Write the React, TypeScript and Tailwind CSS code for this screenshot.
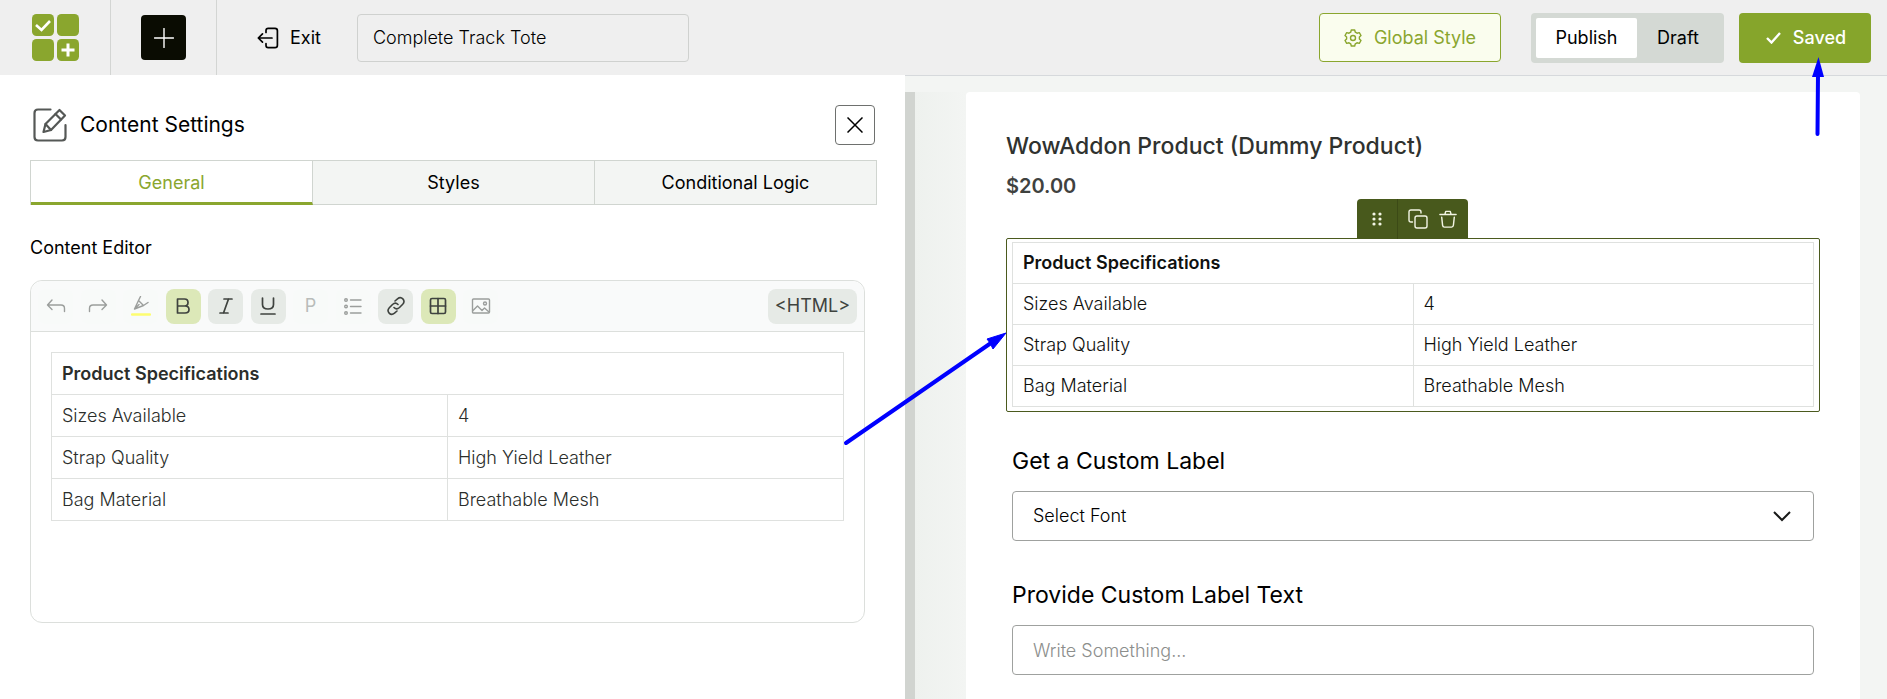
import { useState } from 'react'
import type { ReactNode } from 'react'

const SPEC_TITLE = 'Product Specifications'

const SPECS = [
    { name: 'Sizes Available', value: '4' },
    { name: 'Strap Quality', value: 'High Yield Leather' },
    { name: 'Bag Material', value: 'Breathable Mesh' },
]

const TABS = ['General', 'Styles', 'Conditional Logic']

function Logo() {
    return (
        <svg width="47" height="47" viewBox="0 0 47 47" aria-hidden="true">
            <g fill="#8aa62e">
                <rect width="22" height="22" rx="4.5" />
                <rect x="25" width="22" height="22" rx="4.5" />
                <rect y="25" width="22" height="22" rx="4.5" />
                <rect x="25" y="25" width="22" height="22" rx="4.5" />
            </g>
            <path d="M4 11l5.5 5L18 7" fill="none" stroke="#fff" strokeWidth="2.6" />
            <path d="M36 29.5v13M29.500 36h13" fill="none" stroke="#fff" strokeWidth="3" />
        </svg>
    )
}

function ExitIcon() {
    return (
        <svg width="22" height="22" viewBox="0 0 22 22" fill="none" stroke="currentColor" strokeWidth="1.7" strokeLinecap="round" strokeLinejoin="round" aria-hidden="true">
            <path d="M9 5.500V3.500Q9 1.300 11.200 1.300H18Q20.400 1.300 20.400 3.700V18.300Q20.400 20.700 18 20.700H11.200Q9 20.700 9 18.500V16.500" />
            <path d="M15 11H1.500M5.500 6.800L1.300 11l4.200 4.200" />
        </svg>
    )
}

function EditIcon() {
    return (
        <svg width="34" height="34" viewBox="0 0 34 34" fill="none" stroke="#555856" strokeWidth="2.2" strokeLinecap="round" strokeLinejoin="round" aria-hidden="true">
            <path d="M17.500 1.500H5Q1.500 1.500 1.500 5V29Q1.500 32.500 5 32.500H29Q32.500 32.500 32.500 29V17" />
            <path d="M10.500 24L12.500 16L26.500 2L32 7.500L18 22Z" />
            <path d="M12.500 16L18 22M22.500 6L28 11.500" />
        </svg>
    )
}

function GearIcon() {
    return (
        <svg width="18" height="18" viewBox="0 0 18 18" fill="none" stroke="currentColor" strokeWidth="1.4" strokeLinejoin="round" aria-hidden="true">
            <path d="M7.300 1H10.700L11.300 3.200L13 4.200L15.300 3.600L17 6.500L15.400 8.100V9.900L17 11.500L15.300 14.400L13 13.800L11.300 14.800L10.700 17H7.300L6.700 14.800L5 13.800L2.700 14.400L1 11.500L2.600 9.900V8.100L1 6.500L2.700 3.600L5 4.200L6.700 3.200Z" />
            <circle cx="9" cy="9" r="2.500" />
        </svg>
    )
}

function Icon({ children, size = 20, weight = '1.4' }: { children: ReactNode; size?: number; weight?: string }) {
    return (
        <svg width={size} height={size} viewBox="0 0 20 20" fill="none" stroke="currentColor" strokeWidth={weight} strokeLinecap="round" strokeLinejoin="round" aria-hidden="true">
            {children}
        </svg>
    )
}

const TOOLS: { label: string; tone: 'idle' | 'soft' | 'active'; icon: ReactNode }[] = [
    {
        label: 'Undo',
        tone: 'idle',
        icon: <Icon><path d="M6 4L1.500 9L6 13.500M1.500 9H15Q18.500 9 18.500 12.500V15.500" /></Icon>,
    },
    {
        label: 'Redo',
        tone: 'idle',
        icon: <Icon><path d="M14 4L18.500 9L14 13.500M18.500 9H5Q1.500 9 1.500 12.500V15.500" /></Icon>,
    },
    {
        label: 'Highlight',
        tone: 'idle',
        icon: (
            <Icon>
                <path d="M9.500 0.500L7.500 4.500L12.500 9.500L17 6.500M7.500 4.500L3.500 13L12.500 9.500M3.500 13L8 8.500" />
                <path d="M1 18.500H19" stroke="#fdfd70" strokeWidth="2.500" />
            </Icon>
        ),
    },
    {
        label: 'Bold',
        tone: 'active',
        icon: <Icon weight="1.7"><path d="M4.500 3H11.500Q15 3 15 6.500T11.500 10H4.500ZM4.500 10H12Q16 10 16 13.500T12 17H4.500Z" /></Icon>,
    },
    {
        label: 'Italic',
        tone: 'soft',
        icon: <Icon weight="1.7"><path d="M8 3H16M4 17H12M12.500 3L7.500 17" /></Icon>,
    },
    {
        label: 'Underline',
        tone: 'soft',
        icon: <Icon weight="1.7"><path d="M4.500 2V8.500Q4.500 13 10 13T15.500 8.500V2M3 18H17" /></Icon>,
    },
    {
        label: 'Paragraph',
        tone: 'idle',
        icon: <span className="text-lg text-[#b9bcba]">P</span>,
    },
    {
        label: 'Bullet list',
        tone: 'idle',
        icon: (
            <Icon>
                <path d="M7.500 4H18M7.500 10.500H18M7.500 17H18" />
                <circle cx="3" cy="4" r="1.300" />
                <circle cx="3" cy="10.500" r="1.300" />
                <circle cx="3" cy="17" r="1.300" />
            </Icon>
        ),
    },
    {
        label: 'Link',
        tone: 'soft',
        icon: (
            <Icon weight="1.6">
                <path d="M9 5L11.500 2.800C15.500 -0.500 20 4.500 16.700 8.200L13.500 11.500C11.800 13 9.500 13 8 11.500" />
                <path d="M11 15L8.500 17.200C4.500 20.500 0 15.500 3.300 11.800L6.500 8.500C8.200 7 10.500 7 12 8.500" />
            </Icon>
        ),
    },
    {
        label: 'Table',
        tone: 'active',
        icon: (
            <Icon weight="1.7">
                <rect x="2.500" y="2.500" width="15" height="15" rx="1.500" />
                <path d="M10 2.500V17.500M2.500 10H17.500" />
            </Icon>
        ),
    },
    {
        label: 'Image',
        tone: 'idle',
        icon: (
            <Icon>
                <rect x="1.500" y="3" width="17" height="14" rx="1" />
                <circle cx="14" cy="7.500" r="1.500" />
                <path d="M2 14.500L6.500 10L11 14.500L13.500 12L18 16" />
            </Icon>
        ),
    },
]

const TONES = {
    idle: 'bg-[#f8faf9] text-[#9b9e9c]',
    soft: 'bg-[#e6eae6] text-[#3f433f]',
    active: 'bg-[#dce8b8] text-[#3f433f]',
}

function Header() {
    return (
        <header className="flex h-[75px] items-center bg-[#efefef] text-lg">
            <div className="flex h-full w-[111px] items-center justify-center border-r border-[#d3d5d3]">
                <Logo />
            </div>
            <div className="flex h-full w-[106px] items-center justify-center border-r border-[#d3d5d3]">
                <button aria-label="Add block" className="flex size-[45px] items-center justify-center rounded bg-[#0a0c02] text-white">
                    <Icon><path d="M10 0.500V19.500M0.500 10H19.500" /></Icon>
                </button>
            </div>
            <button className="ml-10 flex items-center gap-[11px] text-black">
                <ExitIcon />
                Exit
            </button>
            <input
                aria-label="Product name"
                defaultValue="Complete Track Tote"
                className="ml-9 h-12 w-[332px] rounded border border-[#cfd1cf] px-[15px] font-light text-black"
            />
            <div className="mr-4 ml-auto flex items-center">
                <button className="flex h-[49px] w-[182px] items-center justify-center gap-3 rounded border border-[#8aa62e] bg-[#fafdee] text-[#8aa62e]">
                    <GearIcon />
                    Global Style
                </button>
                <div className="ml-[30px] flex h-[50px] rounded bg-[#d4d9d4] p-[5px] text-black">
                    <button className="w-[101px] rounded-xs bg-white">Publish</button>
                    <button className="w-[82px]">Draft</button>
                </div>
                <button className="ml-[15px] flex h-[50px] w-[132px] items-center justify-center gap-3 rounded bg-[#86a52b] pl-0.5 font-medium text-white">
                    <svg width="15" height="12" viewBox="0 0 15 12" fill="none" stroke="currentColor" strokeWidth="2.4" aria-hidden="true">
                        <path d="M1 6l4.500 4.500L14 1" />
                    </svg>
                    Saved
                </button>
            </div>
        </header>
    )
}

function SpecTable({ cell }: { cell: string }) {
    return (
        <table className="w-full table-fixed border-collapse text-left text-lg font-light">
            <thead>
                <tr>
                    <th colSpan={2} className={`${cell} font-semibold`}>{SPEC_TITLE}</th>
                </tr>
            </thead>
            <tbody>
                {SPECS.map(spec => (
                    <tr key={spec.name}>
                        <td className={cell}>{spec.name}</td>
                        <td className={cell}>{spec.value}</td>
                    </tr>
                ))}
            </tbody>
        </table>
    )
}

function SettingsPanel() {
    const [tab, setTab] = useState('General')

    return (
        <section className="w-[905px] bg-white pt-[30px] pr-7 pl-[30px] text-black">
            <div className="flex items-center gap-[13px] pl-[3px]">
                <EditIcon />
                <h2 className="text-[21px]">Content Settings</h2>
                <button aria-label="Close" className="mr-0.5 ml-auto flex size-10 items-center justify-center rounded border border-[#6e706e]">
                    <svg width="16" height="16" viewBox="0 0 16 16" stroke="currentColor" strokeWidth="1.5" aria-hidden="true">
                        <path d="M0.500 0.500L15.500 15.500M15.500 0.500L0.500 15.500" />
                    </svg>
                </button>
            </div>

            <div role="tablist" className="mt-[15px] grid h-[45px] grid-cols-3 border-l border-[#d0d5d0] text-lg">
                {TABS.map(name => (
                    <button
                        key={name}
                        role="tab"
                        aria-selected={tab === name}
                        onClick={() => setTab(name)}
                        className={
                            tab === name
                                ? 'border-t border-r border-b-3 border-t-[#d0d5d0] border-r-[#d0d5d0] border-b-[#8aa62e] pt-0.5 text-[#8aa62e]'
                                : 'border-t border-r border-b border-[#d0d5d0] bg-[#f3f5f3]'
                        }
                    >
                        {name}
                    </button>
                ))}
            </div>

            <h3 className="mt-[29px] text-lg">Content Editor</h3>
            <div className="mt-[18px] mr-3 min-h-[343px] rounded-xl border border-[#dcdfdc]">
                <div className="flex h-[51px] items-center justify-between rounded-t-xl border-b border-[#dcdfdc] bg-[#f9fafa] px-[7px]">
                    <div className="flex w-[460px] justify-between">
                        {TOOLS.map(tool => (
                            <button
                                key={tool.label}
                                aria-label={tool.label}
                                className={`flex size-[35px] items-center justify-center rounded-lg ${TONES[tool.tone]}`}
                            >
                                {tool.icon}
                            </button>
                        ))}
                    </div>
                    <button className="h-[35px] w-[89px] rounded-lg bg-[#e6eae6] text-lg text-[#3f433f]">&lt;HTML&gt;</button>
                </div>
                <div className="px-5 pt-5 text-[#2b2e2b]">
                    <SpecTable cell="h-[42px] border border-[#dfe1df] px-2.5" />
                </div>
            </div>
        </section>
    )
}

function Preview() {
    return (
        <main className="flex flex-1 flex-col border-t border-[#d6d9dc] bg-[#f3f5f3] pt-4">
            <div className="flex flex-1 border-l-10 border-[#d1d4d0]">
                <div className="w-[51px] bg-linear-to-r from-[#eef1ee] to-[#f3f5f3]" />
                <div className="mr-[27px] flex-1 rounded-t bg-white px-10 pt-[38px]">
                    <h1 className="text-[23px] leading-8 font-medium text-[#2f322f]">WowAddon Product (Dummy Product)</h1>
                    <p className="mt-2.5 text-xl leading-7 font-semibold text-[#3f423f]">$20.00</p>

                    <div className="relative mt-[38px] rounded-xs border border-[#4b5a1e] px-[5px] pt-[3px] pb-1 text-[#0f110f]">
                        <div className="absolute bottom-full left-[350px] flex h-10 rounded-t bg-[#48591c] text-[#f2f5e4]">
                            <button aria-label="Move block" className="flex w-[41px] items-center justify-center border-r border-[#3c4a16]">
                                <svg width="10" height="14" viewBox="0 0 10 14" fill="currentColor" aria-hidden="true">
                                    <circle cx="2" cy="2" r="1.600" />
                                    <circle cx="8" cy="2" r="1.600" />
                                    <circle cx="2" cy="7" r="1.600" />
                                    <circle cx="8" cy="7" r="1.600" />
                                    <circle cx="2" cy="12" r="1.600" />
                                    <circle cx="8" cy="12" r="1.600" />
                                </svg>
                            </button>
                            <button aria-label="Duplicate block" className="flex w-10 items-center justify-center">
                                <Icon>
                                    <path d="M4.500 13H3Q1 13 1 11V3Q1 1 3 1H11Q13 1 13 3V4" />
                                    <rect x="7" y="7" width="12" height="12" rx="2" />
                                </Icon>
                            </button>
                            <button aria-label="Delete block" className="flex w-[30px] items-center pl-px">
                                <Icon size={18} weight="1.6">
                                    <path d="M1 5H19M6.500 5L7.500 1.500H12.500L13.500 5M3 8L4 17Q4.200 19 6 19H14Q15.800 19 16 17L17 8" />
                                </Icon>
                            </button>
                        </div>
                        <SpecTable cell="h-[41px] border border-[#dfe1df] px-2.5" />
                    </div>

                    <div className="px-1.5">
                        <label htmlFor="font" className="mt-[33px] block text-[23px] leading-8 text-black">Get a Custom Label</label>
                        <div className="relative mt-3.5">
                            <select id="font" className="h-[50px] w-full appearance-none rounded border border-[#9fa19f] bg-white px-5 text-lg font-light text-black">
                                <option>Select Font</option>
                            </select>
                            <svg width="18" height="11" viewBox="0 0 18 11" fill="none" stroke="#181a18" strokeWidth="2" className="pointer-events-none absolute top-5 right-[23px]" aria-hidden="true">
                                <path d="M1 1l8 8 8-8" />
                            </svg>
                        </div>
                        <label htmlFor="label-text" className="mt-[38px] block text-[23px] leading-8 text-black">Provide Custom Label Text</label>
                        <input
                            id="label-text"
                            placeholder="Write Something..."
                            className="mt-3.5 h-[50px] w-full rounded border border-[#9fa19f] px-5 text-lg font-light placeholder:text-[#8c8e8c]"
                        />
                    </div>
                </div>
            </div>
        </main>
    )
}

export default function App() {
    return (
        <div className="relative flex min-h-screen flex-col bg-white font-['Inter',sans-serif]">
            <Header />
            <div className="flex flex-1">
                <SettingsPanel />
                <Preview />
            </div>

            {/* callout arrows drawn over the page */}
            <svg width="164" height="114" viewBox="0 0 164 114" className="pointer-events-none absolute top-[332px] left-[843px]" aria-hidden="true">
                <path d="M3 111L148 11" stroke="#0000ff" strokeWidth="4" strokeLinecap="round" />
                <path d="M163 1L144 7L147 11L150 17Z" fill="#0000ff" stroke="#0000ff" />
            </svg>
            <svg width="14" height="82" viewBox="0 0 14 82" className="pointer-events-none absolute top-[56px] right-[62px]" aria-hidden="true">
                <path d="M6.500 78L7 18" stroke="#0000ff" strokeWidth="4" strokeLinecap="round" />
                <path d="M7.500 1L1 21H13Z" fill="#0000ff" />
            </svg>
        </div>
    )
}
